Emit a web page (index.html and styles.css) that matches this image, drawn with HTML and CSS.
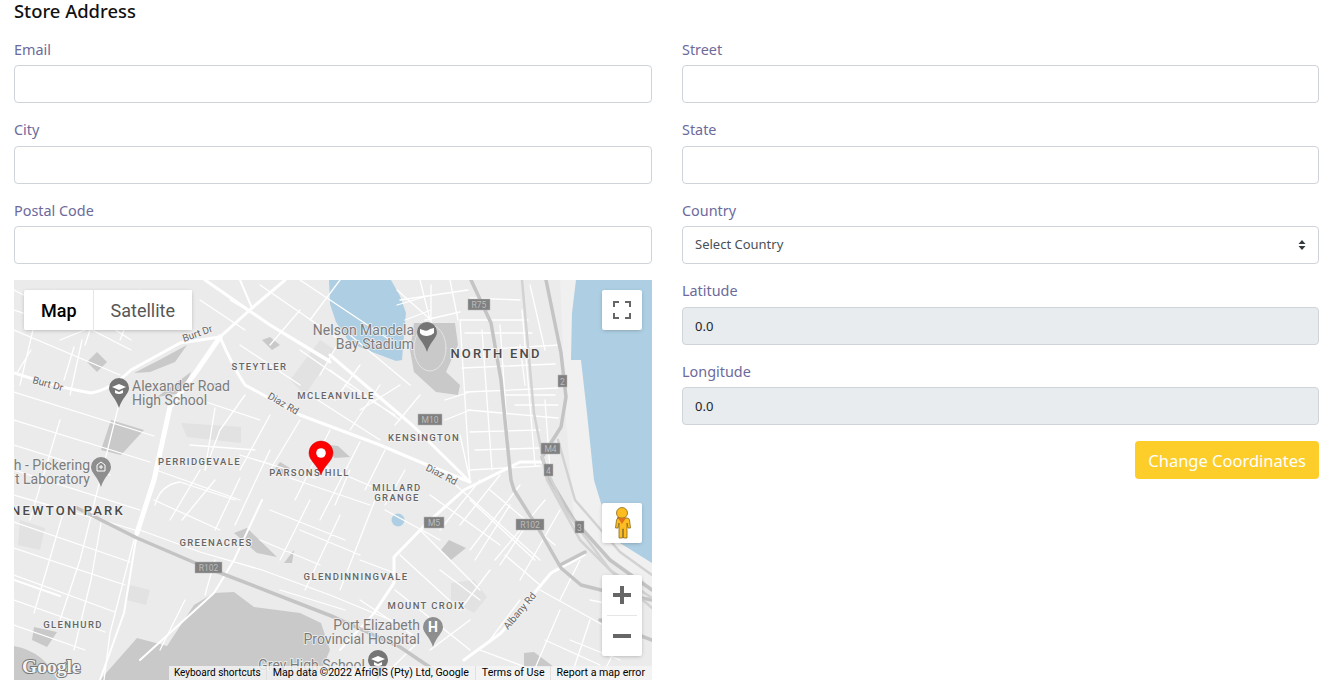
FILE: index.html
```html
<!DOCTYPE html>
<html lang="en">
<head>
    <meta charset="UTF-8">
    <meta name="viewport" content="width=device-width, initial-scale=1.0">
    <title>Store Address</title>
    <link rel="stylesheet" href="styles.css">
</head>
<body>
    <div class="container">
        <h1 class="page-title">Store Address</h1>
        <div class="columns">
            <div class="column">
                <div class="form-group">
                    <label for="email">Email</label>
                    <input type="text" id="email">
                </div>
                <div class="form-group">
                    <label for="city">City</label>
                    <input type="text" id="city">
                </div>
                <div class="form-group">
                    <label for="postal">Postal Code</label>
                    <input type="text" id="postal">
                </div>

                <div class="map">
                    <svg class="map-canvas" viewBox="14 280 638 400" xmlns="http://www.w3.org/2000/svg">
                        <rect x="14" y="280" width="638" height="400" fill="#ebebeb"/>

                        <!-- lighter land along the shore -->
                        <path class="shore" d="M560 280 L576 280 L572 313 L571 360 L581 360 L587 413 L594 480 L604 513 L620 543 L652 563 L652 590 L610 560 L574 520 L566 420 Z"/>

                        <!-- water -->
                        <path class="water" d="M329 280 L391 280 L400 296 L406 313 L404 335 L402 360 L396 361 L372 352 L350 343 L336 322 L330 304 Z"/>
                        <path class="water" d="M576 280 L572 313 L571 360 L581 360 L587 413 L594 480 L604 513 L620 543 L652 563 L652 280 Z"/>
                        <circle class="water" cx="398" cy="520" r="6.5"/>
                        <circle class="water" cx="216" cy="386" r="3"/>

                        <!-- parks and grounds -->
                        <path class="ground" d="M100 680 L137 638 L167 646 L194 605 L214 593 L234 592 L254 607 L300 613 L321 623 L330 650 L317 680 Z"/>
                        <path class="ground" d="M14 646 Q45 652 57 680 L14 680 Z"/>
                        <path class="water-edge" d="M38 668 Q50 672 57 680"/>
                        <path class="ground" d="M111 420 L144 430 L121 455 L101 450 Z"/>
                        <path class="ground" d="M87 362 L97 352 L107 362 L97 372 Z"/>
                        <path class="ground" d="M414 323 L455 323 L458 345 L446 372 L460 385 L458 395 L436 392 L414 372 L410 350 Z"/>
                        <path class="ground" d="M134 373 Q160 360 187 345 L175 362 L150 372 Z"/>
                        <path class="ground" d="M157 397 L191 372 L182 393 Z"/>
                        <path class="ground" d="M441 550 L449 540 L466 548 L451 560 Z"/>
                        <path class="ground" d="M524 653 L534 652 L554 667 L524 667 Z"/>
                        <path class="ground" d="M234 533 L247 528 L277 557 L257 553 Z"/>
                        <path class="ground" d="M284 563 L294 550 L292 563 Z"/>
                        <path class="ground" d="M34 627 L57 632 L47 647 L32 640 Z"/>
                        <path class="ground" d="M330 445 L338 446 L350 457 L334 458 Z"/>
                        <path class="ground" d="M280 462 L290 468 L284 476 L274 470 Z"/>
                        <path class="ground" d="M262 340 L270 337 L280 345 L272 350 Z"/>
                        <path class="soft" d="M181 423 L241 427 L241 443 L187 437 Z"/>
                        <path class="soft" d="M290 380 L320 340 L335 350 L305 395 Z"/>
                        <path class="soft" d="M451 583 L474 580 L487 597 L474 613 L451 600 Z"/>
                        <path class="soft" d="M20 520 L45 528 L40 550 L18 545 Z"/>
                        <path class="soft" d="M130 585 L150 590 L146 605 L126 600 Z"/>

                        <!-- stadium ring -->
                        <ellipse class="street ring" cx="430" cy="348" rx="16" ry="23"/>

                        <!-- local streets -->
                        <path class="street" d="M14 392 L154 436 M14 420 L150 462 M14 445 L110 475 M14 470 L140 510 M14 495 L135 530 M14 522 L130 562 M14 548 L125 585 M14 575 L115 612 M14 600 L105 632 M14 625 L85 650 M60 420 L30 520 M120 400 L80 560 L60 620 M82 340 L70 395 M40 300 L20 385 M101 523 L91 580 L74 650 M64 510 L34 613 M134 540 L110 633 L104 680 M160 300 L60 340 M14 330 L120 375 M14 290 L131 350 M54 290 L131 340 M74 347 L64 380 M31 350 L17 373 M100 300 L85 345 M140 290 L120 340 M14 310 L60 325"/>
                        <path class="street" d="M140 530 L200 552 L262 570 L330 595 L410 628 M154 500 L220 530 M156 470 L240 500 M200 470 L170 520 M240 455 L315 478 M240 478 L215 530 M270 450 L235 525 M182 520 L215 480 M155 505 Q160 485 180 482 L235 500 M205 595 L215 560 M160 650 L185 600 M200 400 L260 420 M190 445 L255 450 M215 408 L205 470"/>
                        <path class="street" d="M245 395 L220 430 L205 470 M270 415 L240 470 M300 420 L270 470 M330 430 L295 500 M360 442 L320 520 M290 478 L370 505 M270 510 L345 540 M260 540 L320 565 M310 500 L280 560 M340 515 L305 590 M375 500 L340 590 M280 590 L345 610 M300 530 L360 555 M310 460 L380 490 M350 470 L335 505 M385 450 L365 490 M405 470 L385 505 M385 510 L440 540 M360 560 L400 575"/>
                        <path class="street" d="M230 300 L330 360 M260 285 L340 340 M200 300 L245 330 M300 280 L390 340 M300 310 L270 345 M340 280 L310 320 M240 345 L300 385 M340 340 L320 375 M360 365 L335 400 M380 385 L350 430 M310 395 L380 440 M330 370 L400 420 M350 335 L410 385 M397 290 L431 320 M397 305 L431 295 M405 320 L431 310 M431 285 L431 325 M345 385 L395 415 M360 410 L400 385 M395 425 L420 395 M300 350 L350 385"/>
                        <path class="street" d="M460 320 L528 320 M465 333 L532 333 M470 350 L560 345 M462 368 L555 364 M466 392 L558 388 M468 410 L558 418 M470 432 L540 430 M475 450 L540 448 M470 470 L540 466 M460 320 L470 480 M482 330 L492 470 M500 325 L510 470 M522 310 L535 465 M545 400 L550 470 M400 300 L468 290 M425 320 L460 312 M420 280 L430 320 M450 280 L458 320 M470 298 L520 300 M445 400 L470 392 M530 285 L545 350 M520 345 L525 385 M505 395 L555 395 M515 405 L558 405 M445 420 L470 410 M460 435 L470 480"/>
                        <path class="street" d="M430 495 L500 545 M450 480 L540 560 M420 530 L480 590 M480 480 L440 530 M500 475 L460 525 M520 485 L470 550 M545 500 L495 560 M560 510 L520 580 M400 555 L460 610 M395 590 L470 650 M470 620 L430 650 M540 590 L630 640 M560 610 L530 680 M590 620 L570 680 M620 640 L600 680 M520 600 L490 640 M360 600 L420 640 L380 680 M480 650 L560 680 M470 500 L535 560 M490 490 L555 545 M510 505 L475 560 M530 520 L500 565 M505 555 L540 585 M580 560 L560 600 M590 600 L640 610 M570 640 L620 660 M545 640 L600 665 M440 570 L480 600 M490 570 L460 610"/>

                        <!-- main roads -->
                        <path class="road" d="M14 373 Q60 388 91 393 Q110 390 131 370 L180 343 L220 337 L252 308 L285 280"/>
                        <path class="road wide" d="M220 337 L196 372 L170 407 L154 480 L137 533"/>
                        <path class="road slim" d="M137 533 L124 613 L100 680"/>
                        <path class="road" d="M220 337 Q232 365 245 385 L300 415 L380 445 L420 462 L470 482"/>
                        <path class="road" d="M205 280 L270 325 L330 362 M330 355 L412 425 L470 482"/>
                        <path class="road" d="M374 613 L394 583 L394 557 L427 523 L464 490 L520 462 L545 462"/>
                        <path class="road" d="M464 660 L501 633 L551 573 L584 555"/>
                        <path class="road slim" d="M340 650 L377 610 M240 280 L252 308 M140 660 L214 593 L234 560 L262 500 M14 580 L60 596"/>

                        <!-- highways -->
                        <path class="highway" d="M75 507 L137 538 L200 565 L334 617 L400 647 L434 670"/>
                        <path class="highway" d="M471 280 L491 323 L501 380 L511 480 L514 490 L541 533 L561 568 L581 585 L601 590 L652 600"/>
                        <path class="highway" d="M546 280 L561 353 L566 397 L561 427 L542 457 L550 480 L574 520 L610 560 L652 590"/>
                        <path class="highway thin" d="M522 280 L534 413 L547 480 L580 540 L620 580 L652 608"/>
                        <path class="highway thin" d="M558 440 L575 500 L620 552 L652 575 M547 470 L565 510 L610 570 L652 598"/>
                        <path class="highway" d="M560 565 L585 552 M600 620 L652 640"/>

                        <!-- road shields -->
                        <g class="shield">
                            <rect x="468" y="299" width="22" height="11"/><text x="479" y="308">R75</text>
                            <rect x="558" y="375" width="9" height="12"/><text x="562.5" y="385">2</text>
                            <rect x="418" y="414" width="24" height="11"/><text x="430" y="423">M10</text>
                            <rect x="541" y="443" width="19" height="11"/><text x="550.5" y="452">M4</text>
                            <rect x="544" y="464" width="9" height="12"/><text x="548.5" y="474">4</text>
                            <rect x="424" y="517" width="20" height="11"/><text x="434" y="526">M5</text>
                            <rect x="516" y="519" width="28" height="11"/><text x="530" y="528">R102</text>
                            <rect x="575" y="521" width="9" height="12"/><text x="579.5" y="531">3</text>
                            <rect x="195" y="562" width="27" height="11"/><text x="208.5" y="571">R102</text>
                        </g>

                        <!-- places -->
                        <g class="place">
                            <text x="259.5" y="370">STEYTLER</text>
                            <text x="336" y="399">MCLEANVILLE</text>
                            <text x="424" y="441">KENSINGTON</text>
                            <text x="199.5" y="465">PERRIDGEVALE</text>
                            <text x="309.5" y="476">PARSONS HILL</text>
                            <text x="397" y="491">MILLARD</text>
                            <text x="397" y="501">GRANGE</text>
                            <text x="216" y="546">GREENACRES</text>
                            <text x="356" y="580">GLENDINNINGVALE</text>
                            <text x="426.5" y="609">MOUNT CROIX</text>
                            <text x="73" y="628">GLENHURD</text>
                        </g>
                        <g class="place big">
                            <text x="496" y="358">NORTH END</text>
                            <text x="68" y="515">NEWTON PARK</text>
                        </g>
                        <g class="roadname">
                            <text transform="translate(184 342) rotate(-20)">Burt Dr</text>
                            <text transform="translate(32 383) rotate(15)">Burt Dr</text>
                            <text transform="translate(267 398) rotate(30)">Diaz Rd</text>
                            <text transform="translate(425 470) rotate(27)">Diaz Rd</text>
                            <text transform="translate(508 630) rotate(-50)">Albany Rd</text>
                        </g>
                        <g class="poi">
                            <text x="132" y="391">Alexander Road</text>
                            <text x="132" y="405">High School</text>
                            <text x="90" y="470" text-anchor="end">h - Pickering</text>
                            <text x="90" y="484" text-anchor="end">t Laboratory</text>
                            <text x="414" y="335" text-anchor="end">Nelson Mandela</text>
                            <text x="414" y="349" text-anchor="end">Bay Stadium</text>
                            <text x="420" y="630" text-anchor="end">Port Elizabeth</text>
                            <text x="420" y="644" text-anchor="end">Provincial Hospital</text>
                            <text x="365" y="670" text-anchor="end">Grey High School</text>
                        </g>

                        <!-- poi pins -->
                        <path class="pin" d="M119 378 a10 10 0 0 1 10 10 c0 6 -7 10 -10 20 c-3 -10 -10 -14 -10 -20 a10 10 0 0 1 10 -10 Z"/>
                        <path class="pin-mark" d="M119 384 l7 3 -7 3 -7 -3 Z M115 390 v3 q4 2 8 0 v-3 l-4 2 Z"/>
                        <path class="pin light" d="M101 457 a10 10 0 0 1 10 10 c0 6 -7 10 -10 20 c-3 -10 -10 -14 -10 -20 a10 10 0 0 1 10 -10 Z"/>
                        <path class="pin-line" d="M97 465 l4 -3 4 3 v6 h-8 Z M101 465 v4 M99 467 h4"/>
                        <path class="pin" d="M427 322 a10 10 0 0 1 10 10 c0 6 -7 10 -10 20 c-3 -10 -10 -14 -10 -20 a10 10 0 0 1 10 -10 Z"/>
                        <path class="pin-mark" d="M420 329 l3 1 q4 2 7 -1 l4 -1 v5 q-3 3 -7 3 q-5 0 -7 -3 Z"/>
                        <path class="pin light" d="M433 617 a10 10 0 0 1 10 10 c0 6 -7 10 -10 20 c-3 -10 -10 -14 -10 -20 a10 10 0 0 1 10 -10 Z"/>
                        <text class="pin-letter" x="433" y="632">H</text>
                        <path class="pin" d="M378 650 a10 10 0 0 1 10 10 c0 6 -7 10 -10 20 c-3 -10 -10 -14 -10 -20 a10 10 0 0 1 10 -10 Z"/>
                        <path class="pin-mark" d="M378 656 l7 3 -7 3 -7 -3 Z M374 662 v3 q4 2 8 0 v-3 l-4 2 Z"/>

                        <!-- selected store -->
                        <path fill="#f00" stroke="#c40000" stroke-width="0.5" d="M321 441 a12 12 0 0 1 12 12 c0 8 -9 12 -12 22 c-3 -10 -12 -14 -12 -22 a12 12 0 0 1 12 -12 Z"/>
                        <circle cx="321" cy="453" r="4.8" fill="#fff"/>

                        <text class="logo" x="22" y="673">Google</text>
                    </svg>

                    <div class="map-type">
                        <button class="map-type-btn active">Map</button>
                        <button class="map-type-btn">Satellite</button>
                    </div>

                    <button class="map-btn fullscreen" aria-label="Fullscreen">
                        <svg width="18" height="18" viewBox="0 0 18 18">
                            <path d="M0 6V0h6v2H2v4zM12 0h6v6h-2V2h-4zM18 12v6h-6v-2h4v-4zM6 18H0v-6h2v4h4z" fill="#666"/>
                        </svg>
                    </button>

                    <button class="map-btn pegman" aria-label="Street View">
                        <svg width="18" height="32" viewBox="0 0 18 32">
                            <circle cx="9" cy="6" r="5.5" fill="#fdbc1f" stroke="#8a6a1a" stroke-width="0.8"/>
                            <path d="M4 11 h10 q2 0 2.5 2 l1 8 h-2.5 l-1 -5 v15 h-3.5 v-9 h-1 v9 h-3.5 v-15 l-1 5 h-2.5 l1 -8 q.5 -2 2.5 -2 Z" fill="#fdbc1f" stroke="#8a6a1a" stroke-width="0.8"/>
                            <path d="M5 11 h8 l-4 6 Z" fill="#e2711d"/>
                        </svg>
                    </button>

                    <div class="zoom-box">
                        <button class="zoom-btn" aria-label="Zoom in">
                            <svg width="18" height="18" viewBox="0 0 18 18"><path d="M18 7h-7V0H7v7H0v4h7v7h4v-7h7z" fill="#666"/></svg>
                        </button>
                        <div class="zoom-line"></div>
                        <button class="zoom-btn" aria-label="Zoom out">
                            <svg width="18" height="18" viewBox="0 0 18 18"><path d="M0 7h18v4H0z" fill="#666"/></svg>
                        </button>
                    </div>

                    <div class="attribution">
                        <span class="attr-item keyboard">Keyboard shortcuts</span>
                        <span class="attr-item">Map data ©2022 AfriGIS (Pty) Ltd, Google</span>
                        <span class="attr-item terms">Terms of Use</span>
                        <span class="attr-item">Report a map error</span>
                    </div>
                </div>
            </div>

            <div class="column">
                <div class="form-group">
                    <label for="street">Street</label>
                    <input type="text" id="street">
                </div>
                <div class="form-group">
                    <label for="state">State</label>
                    <input type="text" id="state">
                </div>
                <div class="form-group">
                    <label for="country">Country</label>
                    <select id="country">
                        <option>Select Country</option>
                    </select>
                </div>
                <div class="form-group">
                    <label for="lat">Latitude</label>
                    <input type="text" id="lat" value="0.0" disabled>
                </div>
                <div class="form-group">
                    <label for="lng">Longitude</label>
                    <input type="text" id="lng" value="0.0" disabled>
                </div>
                <div class="actions">
                    <button class="btn-change">Change Coordinates</button>
                </div>
            </div>
        </div>
    </div>
</body>
</html>
```

FILE: styles.css
```css
* {
    box-sizing: border-box;
}
body {
    margin: 0;
    font-family: "Noto Sans", sans-serif;
    background-color: #fff;
    color: #212529;
}
.container {
    padding: 0 15px 14px 14px;
}
.page-title {
    margin: 0;
    height: 38.5px;
    font-size: 18.4px;
    line-height: 21px;
    font-weight: 500;
    color: #111;
}
.columns {
    display: grid;
    grid-template-columns: 638px 637px;
    column-gap: 30px;
}
.form-group {
    margin-bottom: 16px;
}
.form-group label {
    display: block;
    margin-bottom: 5px;
    font-size: 14.4px;
    line-height: 21.5px;
    color: #6c6a9c;
}
input[type="text"], select {
    display: block;
    width: 100%;
    height: 38px;
    padding: 6px 12px;
    font-family: "Noto Sans", sans-serif;
    font-size: 13px;
    color: #495057;
    background-color: #fff;
    border: 1px solid #ced4da;
    border-radius: 4px;
}
input[type="text"]:disabled {
    background-color: #e9ecef;
    color: #212529;
}
select {
    appearance: none;
    padding: 4px 12px 7px;
    background-image: url("data:image/svg+xml,%3Csvg xmlns='http://www.w3.org/2000/svg' width='8' height='12'%3E%3Cpath d='M4 1l3.5 4h-7zM4 11L.5 7h7z' fill='%23343a40'/%3E%3C/svg%3E");
    background-repeat: no-repeat;
    background-position: right 12px center;
}
.actions {
    display: flex;
    justify-content: flex-end;
}
.btn-change {
    height: 38px;
    padding: 0 13px;
    font-family: "Noto Sans", sans-serif;
    font-size: 16.5px;
    color: #fff;
    background-color: #fdcd2a;
    border: none;
    border-radius: 4px;
}

/* map */
.map {
    position: relative;
    height: 400px;
    overflow: hidden;
}
.map-canvas {
    display: block;
    width: 638px;
    height: 400px;
}
.water { fill: #aecfe3; }
.water-edge { fill: none; stroke: #aecfe3; stroke-width: 1.5; }
.shore { fill: #f0f0f0; }
.ground { fill: #c9c9c9; }
.soft { fill: #e2e2e2; }
.street, .road, .highway {
    fill: none;
    stroke-linejoin: round;
    stroke-linecap: round;
}
.street { stroke: #fff; stroke-width: 1.3; }
.street.ring { stroke: #e4e4e4; stroke-width: 1; }
.road { stroke: #fff; stroke-width: 3; }
.road.wide { stroke-width: 5; }
.road.slim { stroke-width: 2; }
.highway { stroke: #c4c4c4; stroke-width: 3.5; }
.highway.thin { stroke: #d2d2d2; stroke-width: 2.5; }
.shield rect { fill: #808080; stroke: #b5b5b5; stroke-width: 0.5; }
.shield text {
    font-family: Roboto, sans-serif;
    font-size: 8.5px;
    fill: #bdbdbd;
    text-anchor: middle;
}
.place text {
    font-family: Roboto, sans-serif;
    font-size: 9.5px;
    font-weight: 500;
    letter-spacing: 1.35px;
    fill: #666;
    text-anchor: middle;
    stroke: #f2f2f2;
    stroke-width: 2px;
    paint-order: stroke;
}
.place.big text {
    font-size: 13px;
    letter-spacing: 2.2px;
    fill: #4a4a4a;
}
.roadname text {
    font-family: Roboto, sans-serif;
    font-size: 10px;
    fill: #666;
    stroke: #f2f2f2;
    stroke-width: 2px;
    paint-order: stroke;
}
.poi text {
    font-family: Roboto, sans-serif;
    font-size: 14px;
    fill: #7c7c7c;
    stroke: #f0f0f0;
    stroke-width: 1.5px;
    paint-order: stroke;
}
.pin { fill: #757575; }
.pin.light { fill: #8e8e8e; }
.pin-mark { fill: #fff; }
.pin-line { fill: none; stroke: #fff; stroke-width: 1; }
.pin-letter {
    font-family: Roboto, sans-serif;
    font-size: 14px;
    font-weight: 700;
    fill: #fff;
    text-anchor: middle;
}
.logo {
    font-family: "Liberation Serif", serif;
    font-size: 19.5px;
    font-weight: 700;
    fill: #f4f4f4;
    stroke: #777;
    stroke-width: 2px;
    paint-order: stroke;
}
.map-type {
    position: absolute;
    top: 10px;
    left: 10px;
    display: flex;
    box-shadow: 0 1px 4px -1px rgba(0, 0, 0, 0.3);
    border-radius: 2px;
}
.map-type-btn {
    height: 40px;
    padding: 0 17px;
    font-family: Roboto, sans-serif;
    font-size: 18px;
    color: #565656;
    background-color: #fff;
    border: none;
}
.map-type-btn.active {
    padding-right: 16px;
    font-weight: 500;
    color: #000;
    border-right: 1px solid #e6e6e6;
    border-radius: 2px 0 0 2px;
}
.map-btn {
    position: absolute;
    right: 10px;
    width: 40px;
    height: 40px;
    padding: 0;
    display: flex;
    align-items: center;
    justify-content: center;
    background-color: #fff;
    border: none;
    border-radius: 2px;
    box-shadow: 0 1px 4px -1px rgba(0, 0, 0, 0.3);
}
.fullscreen { top: 10px; }
.pegman { top: 223px; }
.zoom-box {
    position: absolute;
    top: 295px;
    right: 10px;
    width: 40px;
    height: 81px;
    background-color: #fff;
    border-radius: 2px;
    box-shadow: 0 1px 4px -1px rgba(0, 0, 0, 0.3);
}
.zoom-btn {
    display: flex;
    align-items: center;
    justify-content: center;
    width: 40px;
    height: 40px;
    padding: 0;
    background: none;
    border: none;
}
.zoom-line {
    height: 1px;
    margin: 0 5px;
    background-color: #e6e6e6;
}
.attribution {
    position: absolute;
    right: 0;
    bottom: 0;
    display: flex;
    height: 14px;
    font-family: Roboto, sans-serif;
    font-size: 10.6px;
    line-height: 14px;
    color: #000;
    background-color: rgba(245, 245, 245, 0.8);
}
.attr-item {
    padding: 0 6px;
    border-right: 1px solid #e0e0e0;
    white-space: nowrap;
}
.attr-item.keyboard {
    padding: 0 5px;
    font-size: 10px;
}
.attr-item.terms {
    padding-right: 5px;
}
.attr-item:last-child {
    padding-right: 7px;
    border-right: none;
}
```
